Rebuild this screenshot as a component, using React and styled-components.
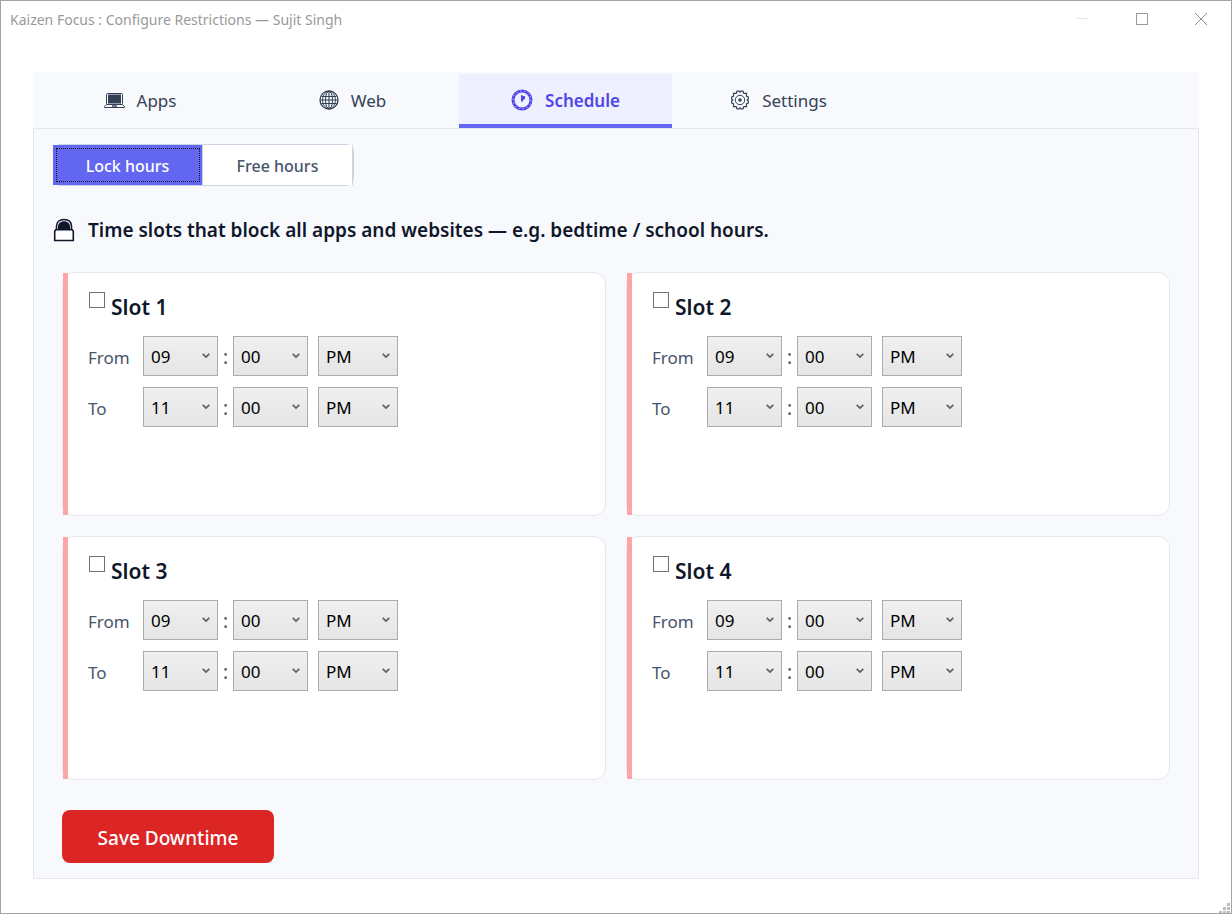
import { useState } from "react";
import styled, { createGlobalStyle } from "styled-components";

const TABS = [
  { name: "Apps", icon: LaptopIcon },
  { name: "Web", icon: GlobeIcon },
  { name: "Schedule", icon: ClockIcon },
  { name: "Settings", icon: GearIcon },
];

const HOURS = Array.from({ length: 12 }, (_, i) => String(i + 1).padStart(2, "0"));
const MINUTES = ["00", "15", "30", "45"];
const PERIODS = ["AM", "PM"];

function App() {
  const [tab, setTab] = useState("Schedule");
  const [mode, setMode] = useState("Lock hours");

  return (
    <>
      <GlobalStyle />
      <Window>
        <TitleBar>
          <WindowTitle>Kaizen Focus : Configure Restrictions — Sujit Singh</WindowTitle>
          <WindowButtons>
            <WindowButton aria-label="Minimize" disabled>
              <svg width="12" height="12" viewBox="0 0 12 12">
                <path d="M0 5.5h12" stroke="#e6e6e6" />
              </svg>
            </WindowButton>
            <WindowButton aria-label="Maximize">
              <svg width="12" height="12" viewBox="0 0 12 12">
                <rect x="0.5" y="0.5" width="11" height="11" fill="none" stroke="#999" />
              </svg>
            </WindowButton>
            <WindowButton aria-label="Close">
              <svg width="12" height="12" viewBox="0 0 12 12">
                <path d="M0 0l12 12M12 0L0 12" stroke="#8a8a8a" />
              </svg>
            </WindowButton>
          </WindowButtons>
        </TitleBar>
        <Body>
          <TabList role="tablist">
            {TABS.map(({ name, icon: Icon }) => (
              <Tab
                key={name}
                role="tab"
                aria-selected={tab === name}
                $active={tab === name}
                onClick={() => setTab(name)}
              >
                <Icon />
                {name}
              </Tab>
            ))}
          </TabList>
          <Panel role="tabpanel">
            <Segmented>
              {["Lock hours", "Free hours"].map((m) => (
                <Segment key={m} $active={mode === m} onClick={() => setMode(m)}>
                  {m}
                </Segment>
              ))}
            </Segmented>
            <Heading>
              <LockIcon />
              Time slots that block all apps and websites — e.g. bedtime / school hours.
            </Heading>
            <SlotGrid>
              {[1, 2, 3, 4].map((n) => (
                <Slot key={n} number={n} />
              ))}
            </SlotGrid>
            <SaveButton>Save Downtime</SaveButton>
          </Panel>
        </Body>
        <Grip width="12" height="10" viewBox="0 0 12 10">
          <path d="M8 0h3v3h-3zM4 4h3v3h-3zM8 4h3v3h-3zM0 8h3v2h-3zM4 8h3v2h-3zM8 8h3v2h-3z" fill="#bcbcbc" />
        </Grip>
      </Window>
    </>
  );
}

export default App;

function Slot({ number }) {
  return (
    <Card>
      <Stripe />
      <CardBody>
        <SlotLabel>
          <Checkbox type="checkbox" />
          <SlotName>Slot {number}</SlotName>
        </SlotLabel>
        <TimeRow label="From" hour="09" />
        <TimeRow label="To" hour="11" />
      </CardBody>
    </Card>
  );
}

function TimeRow({ label, hour }) {
  return (
    <Row role="group" aria-label={label}>
      <RowLabel>{label}</RowLabel>
      <Dropdown label={`${label} hour`} options={HOURS} value={hour} />
      <Colon>:</Colon>
      <Dropdown label={`${label} minute`} options={MINUTES} value="00" />
      <Period>
        <Dropdown label={`${label} AM or PM`} options={PERIODS} value="PM" $wide />
      </Period>
    </Row>
  );
}

function Dropdown({ label, options, value, $wide }) {
  return (
    <SelectBox $wide={$wide}>
      <Select aria-label={label} defaultValue={value}>
        {options.map((o) => (
          <option key={o}>{o}</option>
        ))}
      </Select>
      <Chevron width="8" height="6" viewBox="0 0 8 6">
        <path d="M0.7 0.8L4 4.1L7.3 0.8" fill="none" stroke="#606060" strokeWidth="1.7" />
      </Chevron>
    </SelectBox>
  );
}

function LaptopIcon() {
  return (
    <svg width="22" height="20" viewBox="0 0 22 20">
      <rect x="3.5" y="3.5" width="16" height="11" rx="1" fill="none" stroke="#334155" />
      <rect x="5" y="4.5" width="13" height="9" fill="#334155" />
      <path d="M3.5 14.5l-2 2.2v.8h20v-.8l-2-2.2z" fill="#f8f9fd" stroke="#334155" />
      <path d="M9 16h5" stroke="#334155" strokeWidth="1.4" />
    </svg>
  );
}

function GlobeIcon() {
  return (
    <svg width="20" height="20" viewBox="0 0 20 20" fill="none" stroke="#334155">
      <circle cx="10" cy="10" r="9" strokeWidth="1.3" />
      <ellipse cx="10" cy="10" rx="3.5" ry="9" />
      <ellipse cx="10" cy="10" rx="6.5" ry="8.5" strokeWidth="0.9" />
      <path d="M10 1v18M1 10h18M2.5 6.5h15M2.5 13.5h15" strokeWidth="1.1" />
    </svg>
  );
}

function ClockIcon() {
  return (
    <svg width="22" height="22" viewBox="0 0 22 22" fill="none" stroke="#4f46e5">
      <circle cx="11" cy="11" r="9" strokeWidth="3" />
      <circle cx="11" cy="11" r="9" stroke="#eef0ff" strokeWidth="0.7" strokeDasharray="1.5 2.5" />
      <path d="M10 6h1.5v1H14v3l-2 1v1.500h-2z" fill="#4f46e5" stroke="none" />
    </svg>
  );
}

function GearIcon() {
  return (
    <svg width="20" height="20" viewBox="0 0 20 20" fill="none" stroke="#334155" strokeWidth="1.2">
      <path d="M7 1.2h2l1 1 1-1h2l.8 2.200h2.700v2.800l1.800.800v2l-1 1 1 1v2l-1.800.800v2.800h-2.700L13 18.800h-2l-1-1-1 1H7l-.8-2.200H3.500v-2.800L1.700 13v-2l1-1-1-1V7l1.800-.800V3.400h2.700z" />
      <circle cx="10" cy="10" r="4.7" strokeWidth="1" />
      <circle cx="10" cy="10" r="1.8" fill="#334155" stroke="none" />
    </svg>
  );
}

function LockIcon() {
  return (
    <svg width="22" height="24" viewBox="0 0 22 24">
      <path d="M3.5 12V8.500C3.500 4 6.500 1.500 11 1.500s7.500 2.500 7.500 7V12" fill="none" stroke="#0f172a" strokeWidth="1.6" />
      <path d="M5 12V9C5 5.500 7.500 3.300 11 3.300S17 5.500 17 9v3z" fill="#0f172a" />
      <path d="M2.700 11.700h16.600l1 1.800v9H1.700v-9z" fill="#fff" stroke="#0f172a" strokeWidth="1.6" />
    </svg>
  );
}

const GlobalStyle = createGlobalStyle`
  * {
    box-sizing: border-box;
  }

  body {
    margin: 0;
    background: #fff;
    font-family: "Noto Sans", "Open Sans", sans-serif;
  }

  button,
  select {
    font-family: inherit;
  }
`;

const Window = styled.div`
  position: relative;
  display: flex;
  flex-direction: column;
  min-height: 100vh;
  border: 1px solid #a3a3a3;
`;

const TitleBar = styled.header`
  display: flex;
  justify-content: space-between;
  align-items: center;
  height: 36px;
  padding: 0 1px 0 9px;
`;

const WindowTitle = styled.h1`
  margin: 0;
  color: #999;
  font-size: 14px;
  font-weight: 400;
`;

const WindowButtons = styled.div`
  display: flex;
`;

const WindowButton = styled.button`
  display: flex;
  justify-content: center;
  align-items: center;
  width: 59px;
  height: 36px;
  padding: 0;
  border: none;
  background: none;
`;

const Body = styled.main`
  display: flex;
  flex-direction: column;
  flex: 1;
  padding: 35px 32px 34px;
`;

const TabList = styled.div`
  display: flex;
  height: 56px;
  padding-top: 2px;
  background: #f8f9fd;
`;

const Tab = styled.button`
  display: flex;
  justify-content: center;
  align-items: center;
  gap: 12px;
  width: 213px;
  padding: 2px 0 0;
  border: none;
  border-bottom: 4px solid ${({ $active }) => ($active ? "#6366f1" : "transparent")};
  background: ${({ $active }) => ($active ? "#eef0ff" : "transparent")};
  color: ${({ $active }) => ($active ? "#4f46e5" : "#334155")};
  font-size: 17px;
  font-weight: ${({ $active }) => ($active ? 600 : 400)};
`;

const Panel = styled.section`
  display: flex;
  flex-direction: column;
  align-items: flex-start;
  flex: 1;
  padding: 15px 19px;
  border: 1px solid #e5e7eb;
  background: #f8f9fd;
`;

const Segmented = styled.div`
  display: flex;
  width: 301px;
  height: 42px;
  border: 1px solid #cbd5e1;
  border-left: none;
  border-radius: 8px;
`;

const Segment = styled.button`
  flex: 1;
  padding: 2px 0 0;
  border: none;
  border-right: 1px solid #cbd5e1;
  background: ${({ $active }) => ($active ? "#6366f1" : "#fff")};
  color: ${({ $active }) => ($active ? "#fff" : "#475569")};
  font-size: 16px;
  font-weight: 500;
  outline: ${({ $active }) => ($active ? "1px dotted #111" : "none")};
  outline-offset: -4px;
`;

const Heading = styled.h2`
  display: flex;
  align-items: center;
  gap: 13px;
  height: 28px;
  margin: 30px 0 28px;
  color: #0f172a;
  font-size: 19px;
  font-weight: 600;
`;

const SlotGrid = styled.div`
  display: grid;
  grid-template-columns: 1fr 1fr;
  grid-auto-rows: 1fr;
  gap: 20px;
  flex: 1;
  align-self: stretch;
  padding: 0 9px;
`;

const Card = styled.article`
  display: flex;
  border: 1px solid #e5e7eb;
  border-radius: 12px;
  background: #fff;
`;

const Stripe = styled.div`
  width: 5px;
  background: #fca5a5;
`;

const CardBody = styled.div`
  display: flex;
  flex-direction: column;
  align-items: flex-start;
  gap: 11px;
  padding: 19px 20px;
`;

const SlotLabel = styled.label`
  display: flex;
  align-items: flex-start;
  gap: 6px;
  height: 33px;
`;

const Checkbox = styled.input`
  appearance: none;
  width: 16px;
  height: 16px;
  margin: 0 0 0 1px;
  border: 1px solid #707070;
  background: #fff;

  &:checked {
    background: #6366f1;
  }
`;

const SlotName = styled.span`
  color: #0f172a;
  font-size: 21px;
  font-weight: 600;
  line-height: 30px;
`;

const Row = styled.div`
  display: flex;
  align-items: center;
  height: 40px;
`;

const RowLabel = styled.span`
  width: 55px;
  padding-top: 2px;
  color: #475569;
  font-size: 17px;
`;

const Colon = styled.span`
  width: 15px;
  padding-top: 2px;
  color: #475569;
  font-size: 19px;
  text-align: center;
`;

const Period = styled.div`
  margin-left: 10px;
`;

const SelectBox = styled.div`
  display: grid;
  align-items: center;
  width: ${({ $wide }) => ($wide ? 80 : 75)}px;
  height: 40px;

  > * {
    grid-area: 1 / 1;
  }
`;

const Select = styled.select`
  appearance: none;
  width: 100%;
  height: 100%;
  padding: 0 7px;
  border: 1px solid #acacac;
  border-radius: 0;
  background: linear-gradient(#f0f0f0, #e5e5e5);
  color: #000;
  font-size: 17px;
`;

const Chevron = styled.svg`
  justify-self: end;
  margin-right: 8px;
  pointer-events: none;
`;

const SaveButton = styled.button`
  width: 212px;
  height: 53px;
  margin: 30px 0 0 9px;
  padding: 2px 0 0;
  border: none;
  border-radius: 8px;
  background: #dc2626;
  color: #fff;
  font-size: 19px;
  font-weight: 500;
`;

const Grip = styled.svg`
  position: absolute;
  right: 0;
  bottom: 0;
`;
